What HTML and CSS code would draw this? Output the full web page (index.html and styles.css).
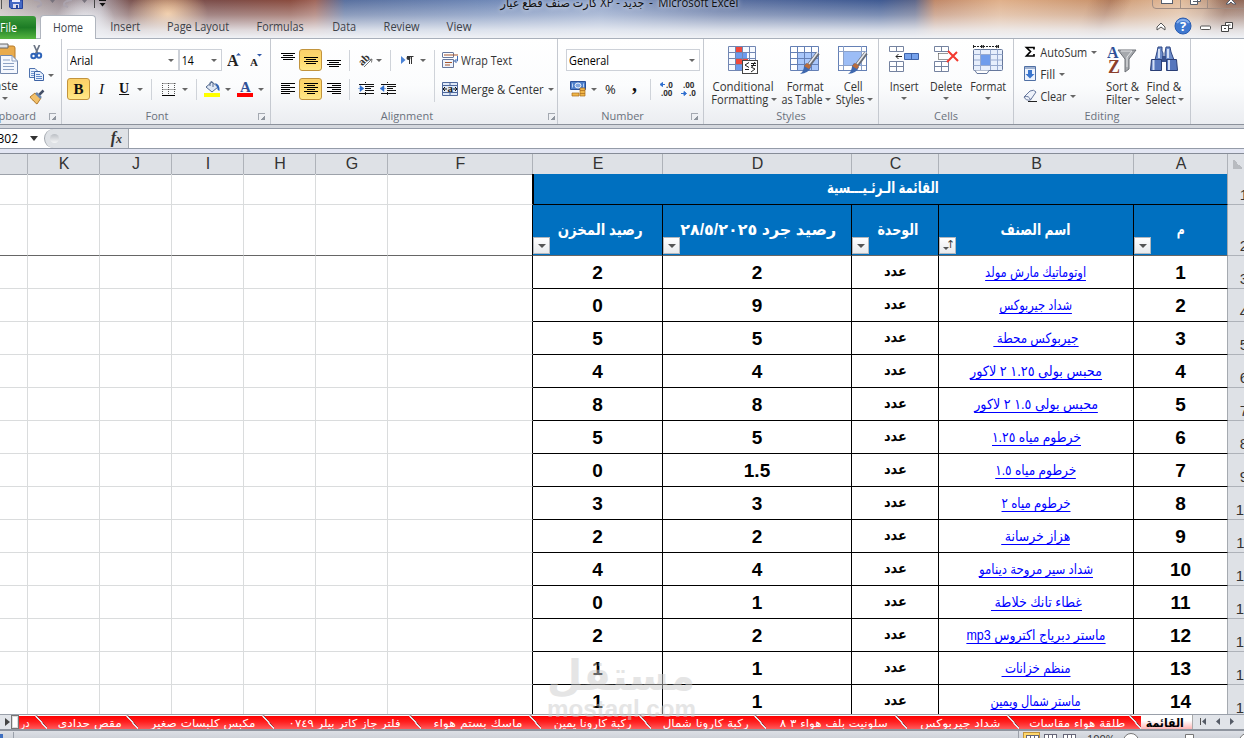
FILE: index.html
```
<!DOCTYPE html>
<html>

<head>
    <meta charset="utf-8">
    <title>Microsoft Excel</title>
    <link rel="stylesheet" href="styles.css">
</head>

<body>
    <!-- Title bar and ribbon tabs -->
    <div class="top">
        <div class="titlebar">
            <div class="quick">
                <svg width="110" height="12" viewBox="0 0 110 12">
                    <path d="M1.500 0V9" stroke="#555" />
                    <path d="M9.500 0H22.500V8.500H11L9.500 7Z" fill="#4569c4" stroke="#24409a" />
                    <rect x="12" y="0" width="8" height="2" fill="#eef" />
                    <rect x="13" y="4" width="6" height="4" fill="#dde" />
                    <rect x="16" y="5" width="2" height="3" fill="#2a489c" />
                    <path d="M34 0Q42 0 41 5L37 7M72 0Q63 1 64 5L68 7" fill="none" stroke="#aaa3ad" stroke-width="2" />
                    <path d="M50 0h5l-2.500 3zM82 0h5l-2.500 3z" fill="#77727c" />
                    <path d="M94.500 0V8" stroke="#444" />
                    <path d="M99 0H106V1H99zM99.500 3H105.500L102.500 6.500z" fill="#111" />
                </svg>
            </div>
            <div class="caption"><bdi dir="rtl" data-w="144">جديد - XP كارت صنف قطع عيار</bdi><span>-</span><span data-w="80">Microsoft Excel</span></div>
            <div class="winbtns">
                <svg width="92" height="9" viewBox="0 0 92 9">
                    <path d="M.5 0V5Q.5 8.500 4 8.500H92M28.500 0V8.500M55.500 0V8.500" fill="none" stroke="#a08d83" />
                    <rect x="9.500" y="-3" width="11" height="6.500" fill="#fff" stroke="#555d6b" />
                    <path d="M38.500 -2V4.500H45.500V-2M41 1.500H48.500V-3" fill="#fff" stroke="#555d6b" />
                    <path d="M74 4L79 -1L84 4H81L79 2L77 4Z" fill="#fff" stroke="#555d6b" />
                </svg>
            </div>
        </div>
        <div class="tabs">
            <div class="tab file"><span data-w="17">File</span></div>
            <div class="tab active"><span data-w="30">Home</span></div>
            <div class="tab"><span data-w="30">Insert</span></div>
            <div class="tab"><span data-w="62">Page Layout</span></div>
            <div class="tab"><span data-w="47">Formulas</span></div>
            <div class="tab"><span data-w="24">Data</span></div>
            <div class="tab"><span data-w="36">Review</span></div>
            <div class="tab"><span data-w="25">View</span></div>
            <div class="tab-tools">
                <svg width="89" height="20" viewBox="0 0 89 20">
                    <path d="M2 11L6 7L10 11V14L6 11L2 14Z" fill="#fff" stroke="#555" />
                    <circle cx="28" cy="10" r="8" fill="#3f78d0" stroke="#285bb0" />
                    <path d="M22 7a7 6 0 0 1 12 0" fill="none" stroke="#86aeea" stroke-width="2" />
                    <text x="28" y="15" text-anchor="middle" class="help">?</text>
                    <rect x="45.500" y="10" width="10" height="3.500" rx="1" fill="#fff" stroke="#555" />
                    <path d="M70.500 6.500h7v6h-7zM73 9h2.500" fill="#fff" stroke="#444" />
                    <path d="M66.500 9.500h7v6h-7z" fill="#fff" stroke="#444" />
                    <path d="M69 12.500h2" stroke="#444" />
                </svg>
            </div>
        </div>
    </div>

    <!-- Ribbon -->
    <div class="ribbon">
        <div class="group clipboard">
            <div class="group-body">
                <div class="paste">
                    <svg width="20" height="32" viewBox="0 0 20 32">
                        <path d="M-4 3H14Q16 3 16 5V28H-4Z" fill="#e9ab4c" stroke="#b87b28" />
                        <path d="M-1 1H9V5H-1Z" fill="#dfe3ea" stroke="#666" />
                        <path d="M1.500 12.500H13L18.500 18V30.500H1.500Z" fill="#f5f8fe" stroke="#7388ad" />
                        <path d="M13 12.500V18H18.500M4 17H11M4 20.500H15M4 23.500H15M4 26.500H15" fill="none" stroke="#8ea2c4" />
                    </svg>
                    <span>Paste</span>
                    <i class="caret"></i>
                </div>
                <div class="clip-list">
                    <svg width="16" height="16" viewBox="0 0 16 16">
                        <path d="M5 0L9 9M10.500 0L6.500 9" stroke="#6b7484" stroke-width="1.700" />
                        <circle cx="4.500" cy="11" r="2.200" fill="none" stroke="#2e63b8" stroke-width="2" />
                        <circle cx="10" cy="10.500" r="2.200" fill="none" stroke="#2e63b8" stroke-width="2" />
                    </svg>
                    <div class="with-caret">
                        <svg width="16" height="16" viewBox="0 0 16 16">
                            <path d="M.5 1.500H6L8.500 4V10.500H.5Z" fill="#e8f0fc" stroke="#4e72ae" />
                            <path d="M2 4.500H5M2 6.500H5M2 8.500H5" stroke="#6f94ce" />
                            <path d="M5.500 4.500H11L14.500 7.500V13.500H5.500Z" fill="#e8f0fc" stroke="#3c62a4" />
                            <path d="M7 7.500H11M7 9.500H13M7 11.500H13" stroke="#5f87c8" />
                        </svg>
                        <i class="caret"></i>
                    </div>
                    <svg width="16" height="16" viewBox="0 0 16 16">
                        <path d="M14.500 1.500L10 6" stroke="#444f66" stroke-width="2.500" />
                        <path d="M1 8L6 4L12 9L8 15Q6 14 5 12Q3 11 1 8Z" fill="#f2c069" stroke="#b27a2e" />
                        <path d="M7 4L12 9" stroke="#6a86ad" stroke-width="2.500" />
                    </svg>
                </div>
            </div>
            <div class="group-label"><span>Clipboard</span><i class="launcher"></i></div>
        </div>

        <div class="group font">
            <div class="group-body stack">
                <div class="row font-row1">
                    <div class="combo"><span data-w="23">Arial</span><i class="caret"></i></div>
                    <div class="combo"><span data-w="12">14</span><i class="caret"></i></div>
                    <svg width="16" height="16" viewBox="0 0 16 16">
                        <text x="0" y="14" class="serif" font-size="16">A</text>
                        <path d="M9 3.500L11.500 1L14 3.500Z" fill="#2f57a8" />
                    </svg>
                    <svg width="16" height="16" viewBox="0 0 16 16">
                        <text x="0" y="14" class="serif" font-size="11">A</text>
                        <path d="M7 2L9.500 4.500L12 2Z" fill="#2f57a8" />
                    </svg>
                </div>
                <div class="row font-row2">
                    <div class="pressed serif">B</div>
                    <em class="serif">I</em>
                    <u class="serif">U</u>
                    <i class="caret"></i>
                    <i class="sep"></i>
                    <svg width="14" height="14" viewBox="0 0 14 14">
                        <path d="M.5 1.500H13.500M.5 7.500H13.500M.5 1V12M6.500 1V12M12.500 1V12" fill="none" stroke="#555" stroke-dasharray="1 1" />
                        <path d="M0 13.500H13" stroke="#000" />
                    </svg>
                    <i class="caret"></i>
                    <i class="sep"></i>
                    <svg width="17" height="16" viewBox="0 0 17 16">
                        <path d="M2 6L8 1L14 6L8 11Z" fill="#dfe8f5" stroke="#53698e" />
                        <path d="M6 5V1.500Q8 -1 9 2V6" fill="none" stroke="#53698e" />
                        <path d="M11 2Q16 3 15.500 10Q13 9 13 6Z" fill="#2f63b5" />
                        <rect x="0" y="12" width="16" height="4" fill="#ff0" />
                    </svg>
                    <i class="caret"></i>
                    <svg width="17" height="16" viewBox="0 0 17 16">
                        <text x="3" y="11" class="serif blue" font-size="15">A</text>
                        <rect x="0" y="12" width="16" height="4" fill="#f00" />
                    </svg>
                    <i class="caret"></i>
                </div>
            </div>
            <div class="group-label"><span>Font</span><i class="launcher"></i></div>
        </div>

        <div class="group align">
            <div class="group-body">
                <div class="stack">
                    <div class="row align-row1">
                        <svg width="14" height="20" viewBox="0 0 14 20"><path d="M0 3.500H14M2 5.500H12M0 7.500H14M2 9.500H12" stroke="#000" /></svg>
                        <div class="pressed"><svg width="14" height="20" viewBox="0 0 14 20"><path d="M0 7.500H14M2 9.500H12M0 11.500H14M2 13.500H12" stroke="#000" /></svg></div>
                        <svg width="14" height="20" viewBox="0 0 14 20"><path d="M0 10.500H14M2 12.500H12M0 14.500H14M2 16.500H12" stroke="#000" /></svg>
                        <i class="sep"></i>
                        <svg width="17" height="16" viewBox="0 0 17 16">
                            <text x="0" y="12" transform="rotate(-45 5 8)" class="ab">ab</text>
                            <path d="M6 15L14 7M14 7L10.500 8M14 7L13.500 10.500" fill="none" stroke="#777" />
                        </svg>
                        <i class="caret"></i>
                        <i class="sep"></i>
                        <svg width="14" height="14" viewBox="0 0 14 14">
                            <path d="M1 3L5.500 7L1 11Z" fill="#4b83d6" />
                            <path d="M9.500 11V3M11.500 11V3M7 3.500H13.500" stroke="#333" />
                            <circle cx="8.500" cy="5" r="2" fill="#333" />
                        </svg>
                        <i class="caret"></i>
                    </div>
                    <div class="row align-row2">
                        <svg width="14" height="14" viewBox="0 0 14 14"><path d="M0 1.500H14M0 3.500H9M0 5.500H14M0 7.500H9M0 9.500H14M0 11.500H9" stroke="#000" /></svg>
                        <div class="pressed"><svg width="14" height="14" viewBox="0 0 14 14"><path d="M0 1.500H14M3 3.500H11M0 5.500H14M3 7.500H11M0 9.500H14M3 11.500H11" stroke="#000" /></svg></div>
                        <svg width="14" height="14" viewBox="0 0 14 14"><path d="M0 1.500H14M5 3.500H14M0 5.500H14M5 7.500H14M0 9.500H14M5 11.500H14" stroke="#000" /></svg>
                        <i class="sep"></i>
                        <svg width="17" height="14" viewBox="0 0 17 14">
                            <path d="M1 2.500H16M7 4.500H16M7 6.500H13M7 8.500H16M1 11.500H16" stroke="#111" />
                            <path d="M7.500 0V14" stroke="#111" stroke-dasharray="1 1" />
                            <path d="M0 6.500H3M2 3.500L6 6.500L2 9.500Z" fill="#2f6fcf" stroke="#2f6fcf" stroke-width=".5" />
                        </svg>
                        <svg width="17" height="14" viewBox="0 0 17 14">
                            <path d="M1 2.500H16M7 4.500H16M7 6.500H13M7 8.500H16M1 11.500H16" stroke="#111" />
                            <path d="M7.500 0V14" stroke="#111" stroke-dasharray="1 1" />
                            <path d="M6 6.500H3M4 3.500L0 6.500L4 9.500Z" fill="#2f6fcf" stroke="#2f6fcf" stroke-width=".5" />
                        </svg>
                    </div>
                </div>
                <i class="sep tall"></i>
                <div class="stack wrap-list">
                    <div class="item">
                        <svg width="16" height="16" viewBox="0 0 16 16">
                            <path d="M.5 1V5M11.500 1V5M.5 .5H11.500M.5 5.500H11.500M.5 8V15.500H11.500V7.500H.5" fill="#eef3fb" stroke="#66779c" />
                            <path d="M2 3H16M3 10.500H10M3 13H8" stroke="#a5552b" />
                            <path d="M15.500 4V9H12.500M14.500 7L12.500 9L14.500 11" fill="none" stroke="#3c6ab5" />
                        </svg>
                        <span data-w="51">Wrap Text</span>
                    </div>
                    <div class="item">
                        <svg width="16" height="16" viewBox="0 0 16 16">
                            <path d="M.5 1.500H15.500V14.500H.5ZM.5 4.500H15.500M.5 11.500H15.500M8 1.500V4.500M8 11.500V14.500" fill="#dfe9f8" stroke="#4e689c" />
                            <path d="M1 8H5M3 6L1 8L3 10M15 8H11M13 6L15 8L13 10" fill="none" stroke="#111" />
                            <text x="5.500" y="11" class="serif" font-size="11">a</text>
                        </svg>
                        <span data-w="83">Merge &amp; Center</span>
                        <i class="caret"></i>
                    </div>
                </div>
            </div>
            <div class="group-label"><span>Alignment</span><i class="launcher"></i></div>
        </div>

        <div class="group number">
            <div class="group-body stack">
                <div class="row"><div class="combo wide"><span data-w="40">General</span><i class="caret"></i></div></div>
                <div class="row number-row2">
                    <svg width="17" height="16" viewBox="0 0 17 16">
                        <path d="M.5 .5H15.500V8.500H.5Z" fill="#4d7fca" stroke="#2a519a" />
                        <ellipse cx="8" cy="4.500" rx="3" ry="2.500" fill="#7fa6df" stroke="#e8f0fb" />
                        <path d="M2.500 2.500V6.500M13.500 2.500V6.500" stroke="#bcd2f3" />
                        <path d="M10 7h5v8h-5zM2 12h7v3h-7z" fill="#f0b648" stroke="#a76a1c" stroke-width=".7" />
                        <path d="M10 9.500h5M10 12.500h5" stroke="#a76a1c" stroke-width=".7" />
                    </svg>
                    <i class="caret"></i>
                    <span class="percent">%</span>
                    <b class="comma">,</b>
                    <i class="sep"></i>
                    <svg width="16" height="16" viewBox="0 0 16 16">
                        <text x="7" y="7" class="dec">.0</text><text x="2" y="15" class="dec">.00</text>
                        <path d="M6 3.500H2M3.500 1.500L1 3.500L3.500 5.500Z" fill="#2f6fcf" stroke="#2f6fcf" />
                    </svg>
                    <svg width="16" height="16" viewBox="0 0 16 16">
                        <text x="2" y="7" class="dec">.00</text><text x="8" y="15" class="dec">.0</text>
                        <path d="M0 12.500H4M3 10.500L5.500 12.500L3 14.500Z" fill="#2f6fcf" stroke="#2f6fcf" />
                    </svg>
                </div>
            </div>
            <div class="group-label"><span>Number</span><i class="launcher"></i></div>
        </div>

        <div class="group styles">
            <div class="group-body">
                <div class="big">
                    <svg width="30" height="30" viewBox="0 0 30 30">
                        <rect x=".5" y="1.500" width="27" height="24" fill="#f7faff" />
                        <path d="M7 1H14V7H7ZM7 13H20V19H7Z" fill="#f0483c" />
                        <path d="M7 7H19V13H7ZM7 19H14V25H7Z" fill="#6d9bee" />
                        <path d="M.5 1.500H27.500V25.500H.5ZM.5 7.500H27.500M.5 13.500H27.500M.5 19.500H27.500M7.500 1V25M14.500 1V25M21.500 1V25" fill="none" stroke="#7186b3" />
                        <rect x="14.500" y="15.500" width="15" height="13" fill="#fff" stroke="#444" />
                        <path d="M21 17.500L17 20L21 22.500M17 24.500H21M23 18.500H28M23 20.500H28M27 17L24 22M23 22L27 24L23 27" fill="none" stroke="#222" />
                    </svg>
                    <span data-w="61">Conditional</span>
                    <span><span data-w="57">Formatting</span><i class="caret"></i></span>
                </div>
                <div class="big">
                    <svg width="30" height="30" viewBox="0 0 30 30">
                        <rect x=".5" y="1.500" width="28" height="24" fill="#fff" />
                        <path d="M7 7H28V25H7Z" fill="#a9c7fa" />
                        <path d="M.5 1.500H28.500V25.500H.5ZM.5 7.500H28.500M.5 13.500H28.500M.5 19.500H28.500M7.500 1V25M14.500 1V25M21.500 1V25" fill="none" stroke="#6580b5" />
                        <path d="M28 8L19 20" stroke="#666c76" stroke-width="4" />
                        <path d="M28 7L19 19" stroke="#e6e8eb" stroke-width="1.500" />
                        <path d="M16 18L21 22Q19 28 10 29Q14 26 14 21Z" fill="#3f68ae" />
                        <path d="M17 18L21 21L19 24L14 21Z" fill="#ba6c3b" />
                    </svg>
                    <span data-w="37">Format</span>
                    <span><span data-w="41">as Table</span><i class="caret"></i></span>
                </div>
                <div class="big">
                    <svg width="30" height="30" viewBox="0 0 30 30">
                        <rect x=".5" y="1.500" width="28" height="24" fill="#fff" stroke="#6580b5" />
                        <path d="M.5 6.500H28M.5 20.500H28M5.500 1V25M23.500 1V25" stroke="#8ba1ca" />
                        <path d="M6 7H23V20H6Z" fill="#9cbdf6" />
                        <path d="M28 8L19 20" stroke="#666c76" stroke-width="4" />
                        <path d="M28 7L19 19" stroke="#e6e8eb" stroke-width="1.500" />
                        <path d="M16 18L21 22Q19 28 10 29Q14 26 14 21Z" fill="#3f68ae" />
                        <path d="M17 18L21 21L19 24L14 21Z" fill="#ba6c3b" />
                    </svg>
                    <span data-w="19">Cell</span>
                    <span><span data-w="29">Styles</span><i class="caret"></i></span>
                </div>
            </div>
            <div class="group-label"><span>Styles</span></div>
        </div>

        <div class="group cells">
            <div class="group-body">
                <div class="big">
                    <svg width="30" height="30" viewBox="0 0 30 30">
                        <path d="M.5 1.500H14.500V6.500H.5ZM7.500 1.500V6.500M.5 16.500H14.500V26.500H.5ZM7.500 16.500V26.500M.5 21.500H14.500" fill="#fff" stroke="#7583a0" />
                        <path d="M15.500 8.500H29.500V14.500H15.500ZM22.500 8.500V14.500" fill="#76a2ec" stroke="#3d62a8" />
                        <path d="M7 11.500H13M9.500 9L7 11.500L9.500 14" fill="none" stroke="#222" />
                    </svg>
                    <span data-w="29">Insert</span>
                    <i class="caret"></i>
                </div>
                <div class="big">
                    <svg width="26" height="30" viewBox="0 0 26 30">
                        <path d="M1.500 1.500H15.500V6.500H1.500ZM8.500 1.500V6.500M1.500 16.500H15.500V26.500H1.500ZM8.500 16.500V26.500M1.500 21.500H15.500" fill="#fff" stroke="#7583a0" />
                        <path d="M5.500 8.500H15.500M5.500 14.500H15.500M5.500 8.500V14.500" stroke="#333" stroke-dasharray="1 1" />
                        <path d="M15 6L25 16M24 7L14 17" stroke="#f3392e" stroke-width="2" />
                    </svg>
                    <span data-w="32">Delete</span>
                    <i class="caret"></i>
                </div>
                <div class="big">
                    <svg width="30" height="30" viewBox="0 0 30 30">
                        <path d="M1 1.500H25" stroke="#222" stroke-dasharray="2 1" />
                        <path d="M.5 0V3M8.500 0V3M25.500 0V3M11 0L9 1.500L11 3M23 0L25 1.500L23 3" fill="none" stroke="#222" />
                        <rect x=".5" y="4.500" width="29" height="21" rx="1" fill="#e7effc" stroke="#66789c" />
                        <path d="M.5 9.500H29.500M.5 20.500H29.500M7.500 4.500V25M17.500 4.500V25M24.500 4.500V25M1 15H29" stroke="#97aacf" />
                        <rect x="8" y="10" width="9" height="10" fill="#6e9cec" />
                        <path d="M2 25.500L4 28.500H14L16 25.500" fill="#fff" stroke="#66789c" />
                    </svg>
                    <span data-w="36">Format</span>
                    <i class="caret"></i>
                </div>
            </div>
            <div class="group-label"><span>Cells</span></div>
        </div>

        <div class="group editing">
            <div class="group-body">
                <div class="edit-list">
                    <div class="item">
                        <svg width="14" height="16" viewBox="0 0 14 16"><path d="M11 5.500V3.500H3.500L7.500 7.500L3.500 12H11V10" fill="none" stroke="#000" stroke-width="1.700" /></svg>
                        <span data-w="47">AutoSum</span><i class="caret"></i>
                    </div>
                    <div class="item">
                        <svg width="14" height="16" viewBox="0 0 14 16">
                            <path d="M1.500 .5H12.500V14.500H1.500Z" fill="#edf3fd" stroke="#5070a4" />
                            <path d="M2 2H12" stroke="#5070a4" />
                            <path d="M5 4H9V8H11.500L7 12.500L2.500 8H5Z" fill="#3b76ce" />
                        </svg>
                        <span data-w="15">Fill</span><i class="caret"></i>
                    </div>
                    <div class="item">
                        <svg width="14" height="16" viewBox="0 0 14 16">
                            <path d="M1 9L7 3Q11 1 13 4L7.500 12Q3 13 1 9Z" fill="#eef2fa" stroke="#66779c" />
                            <path d="M1 9Q6 7 7.500 12" fill="none" stroke="#66779c" />
                            <path d="M5 13.500H14" stroke="#222" />
                        </svg>
                        <span data-w="26">Clear</span><i class="caret"></i>
                    </div>
                </div>
                <div class="big">
                    <svg width="30" height="30" viewBox="0 0 30 30">
                        <path d="M11 5H29L22 14V24L18 27V14Z" fill="#a6a9ad" stroke="#6c7076" />
                        <path d="M14 6H25L20 12V22" fill="none" stroke="#e4e6e8" />
                        <text x="0" y="13" class="serif blue" font-size="16">A</text>
                        <text x="1" y="28" class="serif brown" font-size="18">Z</text>
                    </svg>
                    <span data-w="33">Sort &amp;</span>
                    <span><span data-w="26">Filter</span><i class="caret"></i></span>
                </div>
                <div class="big">
                    <svg width="30" height="30" viewBox="0 0 30 30">
                        <path d="M9 2H13V6L14 8V15H6L8 7ZM17 2H21L22 7L25 15H16V8Z" fill="#6d8cc9" stroke="#2f4682" />
                        <path d="M2.500 14.500H12.500V25.500H1.500ZM17.500 14.500H27.500L28.500 25.500H17.500Z" fill="#5676bd" stroke="#2a3e75" />
                        <path d="M4.500 15V25M20 15V25M10 4V13M19 4V13" stroke="#d4e0f6" stroke-width="2" />
                        <path d="M13 11H17V17H13Z" fill="#39518d" />
                    </svg>
                    <span data-w="35">Find &amp;</span>
                    <span><span data-w="30">Select</span><i class="caret"></i></span>
                </div>
            </div>
            <div class="group-label"><span>Editing</span></div>
        </div>
    </div>

    <!-- Formula bar -->
    <div class="formula">
        <div class="namebox"><span>B302</span></div>
        <i class="name-caret"></i>
        <div class="fx"><i class="knob"></i><span>f<small>x</small></span></div>
        <div class="formula-input"></div>
    </div>

    <!-- Sheet -->
    <div class="sheet" id="sheet"></div>

    <!-- Sheet tabs -->
    <div class="sheet-tabs">
        <div class="scroll-left"></div>
        <div class="splitter"></div>
        <div class="red-tabs" id="redTabs"></div>
        <div class="sheet-active"><span data-w="38" dir="rtl">القائمة</span></div>
        <div class="sheet-nav">
            <svg width="51" height="14" viewBox="0 0 51 14">
                <path d="M7.500 3V10" stroke="#555" />
                <path d="M13 3V10L9 6.500ZM27 3V10L23 6.500ZM37 3V10L41 6.500Z" fill="#555b66" />
            </svg>
        </div>
    </div>

    <!-- Status bar -->
    <div class="status">
        <svg width="15" height="8" viewBox="0 0 15 8">
            <rect x="-1" y="3" width="4" height="5" fill="#3f6fc0" />
            <path d="M13.500 1V8" stroke="#999fa9" />
        </svg>
        <div class="status-right">
            <i class="view on"></i><i class="view"></i><i class="view"></i>
            <span class="zoom">100%</span>
            <svg width="122" height="8" viewBox="0 0 122 8">
                <circle cx="9" cy="10" r="7.500" fill="#fff" stroke="#777" />
                <path d="M63.500 9V3.500H71.500V9" fill="#fff" stroke="#777" />
                <circle cx="125" cy="10" r="7.500" fill="#fff" stroke="#777" />
            </svg>
        </div>
    </div>

    <div class="watermark">
        <svg width="152" height="66" viewBox="0 0 152 66">
            <text x="75" y="36" text-anchor="middle" direction="rtl" textLength="148" lengthAdjust="spacingAndGlyphs" class="wm-ar">مستقل</text>
            <text x="1" y="63" textLength="149" lengthAdjust="spacingAndGlyphs" class="wm-en">mostaql.com</text>
        </svg>
    </div>

    <script>
        // name, drawn width, count, balance, trailing space
        var items = [
            ["اوتوماتيك مارش مولد", 101, "2", "2"],
            ["شداد جيربوكس", 73, "9", "0"],
            ["جيربوكس محطة", 85, "5", "5", 1],
            ["محبس بولى ١.٢٥ ٢ لاكور", 132, "4", "4"],
            ["محبس بولى ١.٥ ٢ لاكور", 124, "8", "8"],
            ["خرطوم مياه ١.٢٥", 89, "5", "5"],
            ["خرطوم مياه ١.٥", 81, "1.5", "0"],
            ["خرطوم مياه ٢", 69, "3", "3"],
            ["هزاز خرسانة", 69, "2", "2", 1],
            ["شداد سير مروحة دينامو", 114, "4", "4"],
            ["غطاء تانك خلاطة", 91, "1", "0", 1],
            ["ماستر دبرياج اكتروس mp3", 139, "2", "2"],
            ["منظم خزانات", 69, "1", "1", 1],
            ["ماستر شمال ويمين", 90, "1", "1"]
        ];

        // sheet tabs from left to right: name, text width, tab width
        var tabs = [
            ["در", 9, 28],
            ["مقص حدادى", 64, 91],
            ["مكبس كلبسات صغير", 105, 136],
            ["فلتر جاز كاتر بيلر ٠٧٤٩", 112, 147],
            ["ماسك بستم هواء", 89, 120],
            ["ركبة كارونا يمين", 78, 110],
            ["ركبة كارونا شمال", 86, 115],
            ["سلونيت بلف هواء ٣ ٨", 108, 141],
            ["شداد جيربوكس", 80, 112],
            ["طلقة هواء مقاسات", 96, 122]
        ];

        function head(text, w, sort) {
            return '<div class="cell th"><span dir="rtl" data-w="' + w + '">' + text + '</span><i class="filter' + (sort ? ' sorted' : '') + '"></i></div>';
        }

        function blanks() {
            return '<div class="cell blank"></div>'.repeat(7);
        }

        function rowNo(n) {
            return '<div class="row-no"><span>' + n + '</span></div>';
        }

        var html = '<div class="line letters">';
        ["", "K", "J", "I", "H", "G", "F", "E", "D", "C", "B", "A"].forEach(function (l) {
            html += '<div>' + l + '</div>';
        });
        html += '<div class="corner"></div></div>';

        html += '<div class="line first">' + blanks() +
            '<div class="cell main-title"><span dir="rtl" data-w="112">القائمة الـرئـيـــسية</span></div>' + rowNo(1) + '</div>';

        html += '<div class="line second">' + blanks() +
            head("رصيد المخزن", 85) + head("رصيد جرد ٢٨/٥/٢٠٢٥", 156) + head("الوحدة", 41) +
            head("اسم الصنف", 70, true) + head("م", 8) + rowNo(2) + '</div>';

        items.forEach(function (r, i) {
            html += '<div class="line">' + blanks() +
                '<div class="cell num">' + r[3] + '</div>' +
                '<div class="cell num">' + r[2] + '</div>' +
                '<div class="cell unit"><span dir="rtl" data-w="23">عدد</span></div>' +
                '<div class="cell"><a dir="rtl" data-w="' + r[1] + '"' + (r[4] ? ' class="spaced"' : '') + '>' + r[0] + '</a></div>' +
                '<div class="cell num">' + (i + 1) + '</div>' + rowNo(i + 3) + '</div>';
        });
        document.getElementById("sheet").innerHTML = html;

        document.getElementById("redTabs").innerHTML = tabs.map(function (t) {
            return '<div class="red-tab" style="width:' + t[2] + 'px"><span dir="rtl" data-w="' + t[1] + '">' + t[0] + '</span></div>';
        }).join("");

        // Condense or stretch a label to its drawn width
        document.querySelectorAll("[data-w]").forEach(function (el) {
            var w = el.getBoundingClientRect().width;
            var target = parseFloat(el.dataset.w);
            el.style.transform = "scaleX(" + target / w + ")";
            el.style.marginRight = el.style.marginLeft = (target - w) / 2 + "px";
        });
    </script>
</body>

</html>
```
FILE: styles.css
```
* {
    box-sizing: border-box;
}

body {
    margin: 0;
    width: 1244px;
    height: 738px;
    overflow: hidden;
    display: flex;
    flex-direction: column;
    position: relative;
    background: #fff;
    font-family: "Open Sans", "DejaVu Sans", sans-serif;
    font-size: 12px;
    color: #333;
}

svg {
    display: block;
    flex: none;
    overflow: hidden;
}

[data-w] {
    display: inline-block;
    white-space: nowrap;
    flex: none;
}

/* Title bar */
.top {
    height: 39px;
    flex: none;
    border-bottom: 1px solid #a9b0bb;
    background:
        linear-gradient(to bottom, rgba(240, 242, 246, 0) 0, rgba(240, 242, 246, .35) 15px, rgba(240, 242, 246, .85) 30px, #f0f2f6 38px),
        radial-gradient(ellipse 40px 30px at 168px 14px, rgba(255, 205, 150, .9), transparent),
        radial-gradient(ellipse 30px 26px at 85px 22px, rgba(240, 240, 245, .9), transparent),
        linear-gradient(112deg, transparent 1010px, rgba(150, 95, 70, .5) 1030px, transparent 1050px, transparent 1120px, rgba(120, 70, 50, .5) 1140px, transparent 1170px),
        linear-gradient(to right, #c8c0bc 0, #9a8c92 60px, #aaa0a8 100px, #7c5552 130px, #7c4c48 220px, #8a4c3f 290px, #a0665a 315px, #59709f 345px, #6e87b6 480px, #8ea2c8 600px, #5b70a0 720px, #3f5a92 880px, #5d6689 915px, #c08868 935px, #e0b08a 1000px, #c9936c 1100px, #e3bd9c 1180px, #9a7768 1244px);
}

.titlebar {
    height: 14px;
    display: flex;
    justify-content: space-between;
    align-items: flex-start;
}

.quick {
    width: 500px;
}

.caption {
    display: flex;
    flex: 1;
    gap: 5px;
    margin-top: -6px;
    line-height: 18px;
    color: #111;
    text-shadow: 0 0 6px #fff;
}

.tabs {
    height: 25px;
    display: flex;
    align-items: flex-end;
    color: #3d4249;
}

.tab {
    height: 24px;
    line-height: 23px;
    margin-right: 27px;
}

.tab.file {
    width: 36px;
    height: 23px;
    margin: 0 4px 0 0;
    color: #fff;
    background: linear-gradient(#3b9a3b, #1d7c25 50%, #55b53f);
    border-radius: 0 3px 0 0;
}

.tab.active {
    height: 25px;
    width: 56px;
    line-height: 24px;
    margin: 0 14px -1px 0;
    text-align: center;
    background: #fff;
    border: 1px solid #b0b5be;
    border-bottom: 0;
    border-radius: 4px 4px 0 0;
}

.tab:nth-child(5) {
    margin-left: 1px;
    margin-right: 28px;
}

.tab:nth-child(7) {
    margin-left: 1px;
}

.tab-tools {
    margin-left: auto;
    height: 23px;
}

.help {
    font: bold 13px "Open Sans", sans-serif;
    fill: #fff;
}

/* Ribbon */
.ribbon {
    height: 86px;
    flex: none;
    display: flex;
    background: linear-gradient(#fff, #fbfcfd 55%, #ebedf1);
    border-bottom: 1px solid #8b919b;
}

.group {
    flex: none;
    display: flex;
    flex-direction: column;
    overflow: hidden;
    border-right: 1px solid #c5c9d0;
}

.group-body {
    height: 69px;
    display: flex;
}

.stack {
    display: flex;
    flex-direction: column;
    gap: 7px;
    padding-top: 10px;
}

.group-body.stack,
.align .stack {
    flex: none;
}

.row {
    display: grid;
    height: 22px;
    align-items: center;
    justify-items: start;
}

.group-label {
    height: 15px;
    display: flex;
    align-items: center;
    justify-content: center;
    font-size: 11px;
    color: #6a717c;
    position: relative;
}

.caret {
    flex: none;
    display: inline-block;
    width: 6px;
    border: 3px solid transparent;
    border-top-color: #666;
    border-bottom: 0;
}

.launcher {
    position: absolute;
    right: 5px;
    top: 5px;
    width: 7px;
    height: 7px;
    border: 1px solid #a4a9b1;
    border-right: 0;
    border-bottom: 0;
    background: linear-gradient(135deg, transparent 60%, #8f959e 60%);
}

.align .launcher {
    right: 2px;
}

.sep {
    width: 1px;
    height: 21px;
    background: #cfd3d9;
}

.sep.tall {
    height: 52px;
    margin-top: 11px;
}

.pressed {
    width: 23px;
    height: 22px;
    display: flex;
    align-items: center;
    justify-content: center;
    border: 1px solid #c2943d;
    border-radius: 3px;
    background: linear-gradient(#fbd06a, #ffdb6e 50%, #ffe889);
}

.serif {
    font-family: "Liberation Serif", serif;
    font-weight: bold;
    fill: #222;
}

.pressed.serif,
em.serif,
u.serif {
    font-size: 15px;
    color: #111;
}

em.serif {
    font-weight: normal;
    padding-left: 2px;
}

u.serif {
    font-size: 14px;
}

.serif.blue {
    fill: #2f5197;
}

.serif.brown {
    fill: #8c3f2c;
}

.ab {
    font: bold 11px "Liberation Serif", serif;
    fill: #333;
}

.combo {
    width: 100%;
    height: 22px;
    padding: 0 4px 0 2px;
    display: flex;
    align-items: center;
    justify-content: space-between;
    background: #fff;
    border: 1px solid #cdd1d8;
    color: #000;
}

.clipboard { width: 62px; }
.font { width: 209px; }
.align { width: 287px; }
.number { width: 146px; }
.styles { width: 175px; }
.cells { width: 135px; }
.editing { width: 177px; }

.paste {
    width: 19px;
    padding-top: 4px;
    display: flex;
    flex-direction: column;
    align-items: flex-end;
}

.paste span {
    line-height: 15px;
    margin: 3px 1px 0 0;
}

.paste .caret {
    margin: 4px 11px 0 0;
}

.clip-list {
    padding: 6px 0 0 10px;
    display: flex;
    flex-direction: column;
    gap: 6px;
}

.with-caret {
    display: flex;
    align-items: center;
    gap: 3px;
}

.clipboard .group-label {
    justify-content: flex-end;
    padding-right: 25px;
}

.font .stack { padding-left: 5px; }
.font .group-label { padding-right: 18px; }
.font-row1 { grid-template-columns: 112px 43px 5px 23px 16px; }
.font-row1 svg:nth-of-type(1) { grid-column: 4; }
.font-row2 { grid-template-columns: 30px 22px 18px 14px 11px 20px 14px 8px 21px 12px 21px 8px; }

.align .group-body { padding-left: 10px; }
.align .group-label { padding-right: 14px; }
.align-row1 { grid-template-columns: 18px 28px 22px 9px 18px 14px 10px 20px 14px; }
.align-row2 { grid-template-columns: 18px 28px 22px 9px 22px 17px; }
.wrap-list { padding-left: 7px; }

.item {
    height: 22px;
    display: flex;
    align-items: center;
    gap: 3px;
}

.item .caret {
    margin-left: 1px;
}

.number .stack { padding-left: 8px; }
.number .group-label { padding-right: 16px; }
.combo.wide { width: 134px; }
.number-row2 { padding-left: 4px; grid-template-columns: 21px 14px 27px 18px 9px 22px 16px; }

.percent {
    font-size: 13px;
    color: #222;
}

.comma {
    font: bold 20px/10px "Liberation Serif", serif;
    margin-top: -10px;
    color: #111;
}

.dec {
    font: bold 8px "Open Sans", sans-serif;
    fill: #333;
}

.big {
    display: flex;
    flex-direction: column;
    align-items: center;
    padding-top: 6px;
    line-height: 13px;
}

.big svg {
    margin-bottom: 5px;
}

.big > .caret {
    margin-top: 4px;
}

.big span .caret {
    margin: 0 0 3px 2px;
}

.big > span {
    white-space: nowrap;
}

.big > span:last-child {
    padding-left: 2px;
}

.styles .big { width: 50px; }
.styles .big:nth-child(1) { width: 79px; }
.styles .big:nth-child(2) { width: 46px; }
.cells .group-body { padding-left: 4px; }
.cells .big { width: 42px; }

.edit-list {
    width: 87px;
    padding: 2px 0 0 9px;
}

.editing .big { width: 42px; }

/* Formula bar */
.formula {
    height: 28px;
    flex: none;
    display: flex;
    border-top: 3px solid #d5d8de;
    border-bottom: 4px solid #e3e6f3;
    box-shadow: inset 0 1px #949ba8, inset 0 -1px #949ba8;
    background: #fff;
    align-items: center;
}

.namebox {
    width: 18px;
    display: flex;
    justify-content: flex-end;
    font-size: 12px;
    color: #000;
}

.name-caret {
    margin: 0 6px 0 12px;
    border: 4px solid transparent;
    border-top: 5px solid #333;
    border-bottom: 0;
}

.fx {
    width: 85px;
    height: 19px;
    display: flex;
    align-items: center;
    justify-content: space-between;
    padding: 0 6px 0 5px;
    background: #dfe2e6;
    border: 1px solid #a2a7ae;
    border-width: 0 1px;
    border-radius: 10px 0 0 10px;
    font: italic bold 16px/17px "Liberation Serif", serif;
}

.fx small {
    font-size: 12px;
}

.knob {
    width: 9px;
    height: 9px;
    border-radius: 50%;
    background: linear-gradient(#bbbfc5, #f5f6f7);
}

/* Sheet */
.sheet {
    height: 561px;
    flex: none;
    overflow: hidden;
    border-top: 1px solid #868c97;
    font-family: "Liberation Sans", "DejaVu Sans", sans-serif;
}

.line {
    display: grid;
    grid-template-columns: 28px repeat(5, 72px) 145px 130px 189px 87px 195px 94px 16px;
    height: 33px;
}

.line.letters {
    height: 20px;
    font-size: 16px;
    line-height: 20px;
    text-align: center;
    color: #333;
    background: #dee1e6;
}

.letters div {
    padding-left: 1px;
    border-right: 1px solid #aeb2b9;
    border-bottom: 1px solid #9da2aa;
}

.letters .corner {
    border-right: 0;
    background: linear-gradient(to top right, #b8bbc0 50%, transparent 50%) 5px 5px / 10px 10px no-repeat;
}

.cell {
    display: flex;
    align-items: center;
    justify-content: center;
    border-right: 1px solid #000;
    border-bottom: 1px solid #000;
    position: relative;
}

.cell.blank {
    border-color: #dadcdd;
}

.cell.blank:nth-child(7) {
    border-right-color: #000;
}

.line .cell:nth-last-child(2) {
    border-right-color: #a5aab0;
}

.line.first {
    height: 31px;
}

.main-title {
    grid-column: 8 / 13;
    background: #0070c0;
    color: #fff;
    font-size: 16px;
    font-weight: bold;
    padding: 0 0 3px 5px;
    box-shadow: inset 1px 0 #000;
}

.line.second {
    height: 51px;
}

.second .cell {
    border-bottom-color: #666;
}

.th {
    background: #0070c0;
    color: #fff;
    font-size: 16px;
    font-weight: bold;
    padding-bottom: 2px;
}

.th:nth-child(8),
.th:nth-child(10) {
    padding-left: 5px;
}

.th:nth-child(9) {
    padding-left: 2px;
}

.filter {
    position: absolute;
    left: 0;
    bottom: 1px;
    width: 17px;
    height: 17px;
    border: 1px solid #b3b7bd;
    background: linear-gradient(#fff, #e8eaed);
}

.filter::after {
    content: "";
    position: absolute;
    left: 4px;
    top: 6px;
    border: 4px solid transparent;
    border-top-color: #555;
    border-bottom: 0;
}

.filter.sorted::after {
    left: 3px;
    top: 9px;
    border-width: 3px 3px 0;
}

.filter.sorted::before {
    content: "↑";
    position: absolute;
    left: 6px;
    top: 0;
    font: 11px/14px "DejaVu Sans", sans-serif;
    color: #444;
}

.num {
    font-size: 19px;
    font-weight: bold;
    color: #000;
    padding-top: 2px;
}

.unit {
    font-size: 14px;
    font-weight: bold;
    color: #000;
    padding-bottom: 2px;
}

.cell a {
    height: 17px;
    margin-top: 1px;
    line-height: 16px;
    font-size: 14px;
    color: #00f;
    border-bottom: 1px solid #00f;
}

.cell a.spaced {
    padding-left: 4px;
}

.row-no {
    background: #dee1e6;
    border-bottom: 1px solid #aeb2b9;
    overflow: hidden;
    display: flex;
    align-items: flex-end;
}

.row-no span {
    flex: none;
    width: 32px;
    text-align: center;
    font-size: 15px;
    line-height: 18px;
}

/* Sheet tabs */
.sheet-tabs {
    height: 17px;
    flex: none;
    display: flex;
    background: #e1e4e9;
    border-top: 1px solid #9aa0aa;
    border-bottom: 2px solid #8f959f;
}

.scroll-left {
    width: 11px;
    padding: 3px 0 0 5px;
}

.scroll-left::before {
    content: "";
    display: block;
    width: 5px;
    border: 4px solid transparent;
    border-left: 5px solid #444;
    border-right: 0;
}

.splitter {
    width: 8px;
    background: #fff;
    border: 1px solid #777;
    box-shadow: inset 0 0 0 1px #ddd;
}

.red-tabs {
    display: flex;
    width: 1122px;
}

.red-tab {
    flex: none;
    height: 14px;
    overflow: hidden;
    padding-right: 6px;
    text-align: center;
    line-height: 17px;
    font-family: "DejaVu Sans", sans-serif;
    font-size: 11px;
    color: #fff;
    background:
        linear-gradient(to top right, transparent 46%, #e6e8ec 47%, #e6e8ec 54%, #933 55%, transparent 60%) right / 12px 14px no-repeat,
        linear-gradient(#fff 1px, #f00 1px, #ff2020 7px, #ff5a5a);
}

.red-tab:first-child {
    padding-right: 16px;
}

.sheet-active {
    width: 52px;
    text-align: center;
    line-height: 16px;
    font-family: "DejaVu Sans", sans-serif;
    font-size: 12px;
    font-weight: bold;
    color: #000;
    padding-right: 3px;
    background: linear-gradient(#fff 40%, #ffb5b5);
}

.sheet-nav {
    border-left: 1px solid #aaa;
}

/* Status bar */
.status {
    height: 8px;
    flex: none;
    overflow: hidden;
    display: flex;
    justify-content: space-between;
    background: linear-gradient(#dcdfe5, #cdd1d8);
}

.status-right {
    width: 226px;
    display: flex;
    border-left: 1px solid #9a9fa8;
    padding-left: 4px;
    gap: 2px;
}

.view {
    width: 17px;
    height: 12px;
    margin-top: 1px;
    flex: none;
    background:
        linear-gradient(#667, #667) 2px 2px / 13px 1px no-repeat,
        repeating-linear-gradient(to right, #667 0, #667 1px, #fff 1px, #fff 4px) 2px 2px / 13px 9px no-repeat;
}

.view.on {
    border: 1px solid #c2943d;
    background-color: #ffd76a;
}

.zoom {
    width: 40px;
    flex: none;
    font-size: 11px;
    line-height: 15px;
    padding-left: 7px;
}

/* Watermark over the lower rows */
.watermark {
    position: absolute;
    left: 546px;
    top: 654px;
    opacity: .5;
}

.wm-ar {
    font: bold 42px "DejaVu Sans", sans-serif;
    fill: #ccc;
}

.wm-en {
    font: bold 24px "Liberation Sans", sans-serif;
    fill: #ccc;
}
```
